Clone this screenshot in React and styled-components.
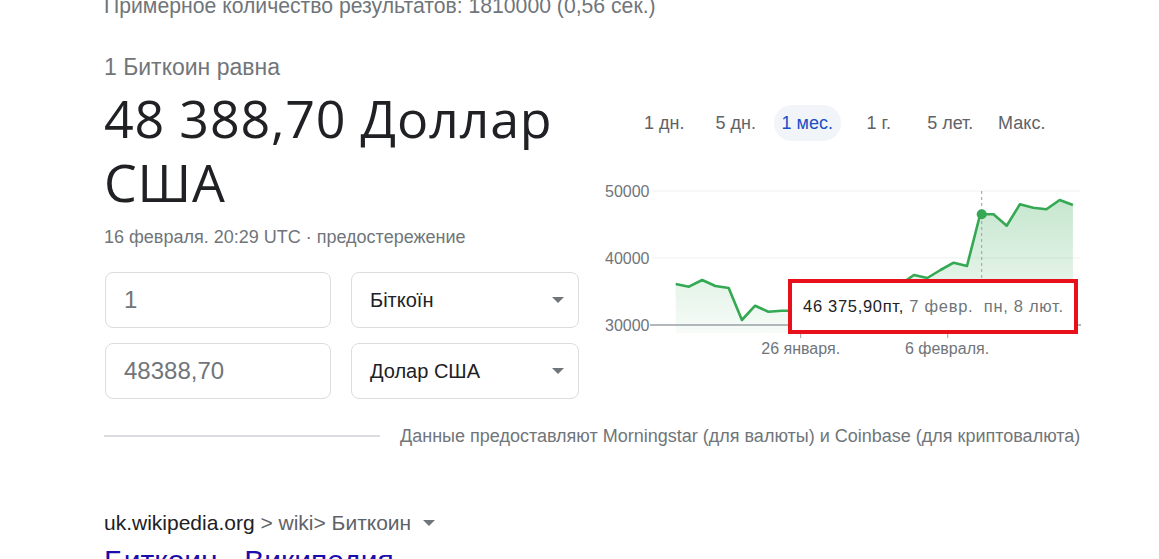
import React from 'react';
import styled, { createGlobalStyle } from 'styled-components';

const Global = createGlobalStyle`
  html, body { margin: 0; padding: 0; background: #fff; }
  body { font-family: "Liberation Sans", Arial, sans-serif; color: #202124; overflow: hidden; }
`;

const Page = styled.div`
  width: 1159px;
  height: 559px;
  overflow: hidden;
  padding-left: 104px;
  box-sizing: border-box;
`;

const Stats = styled.div`
  margin-top: -6px;
  font-size: 21.2px;
  line-height: 24px;
  color: #70757a;
  white-space: nowrap;
`;

const Card = styled.div`
  display: flex;
  margin-top: 36px;
`;

const Left = styled.div`
  width: 496px;
  flex-shrink: 0;
`;

const Lead = styled.div`
  font-size: 23px;
  line-height: 26px;
  color: #70757a;
`;

const Value = styled.div`
  margin-top: 6px;
  font-family: "Open Sans", sans-serif;
  font-size: 52px;
  letter-spacing: 0.8px;
  line-height: 64px;
  color: #202124;
  width: 480px;
`;

const Meta = styled.div`
  margin-top: 12px;
  font-size: 18px;
  line-height: 22px;
  color: #70757a;
`;

const Grid = styled.div`
  display: grid;
  grid-template-columns: 226px 228px;
  column-gap: 20px;
  row-gap: 15px;
  margin-top: 24px;
  margin-left: 1px;
`;

const Field = styled.div`
  height: 56px;
  box-sizing: border-box;
  border: 1px solid #dadce0;
  border-radius: 8px;
  display: flex;
  align-items: center;
  justify-content: space-between;
  padding: 0 14px 0 18px;
  font-size: ${p => (p.$select ? 20 : 24)}px;
  color: ${p => (p.$select ? '#202124' : '#70757a')};
`;

const Caret = styled.span`
  width: 0;
  height: 0;
  border-left: 6px solid transparent;
  border-right: 6px solid transparent;
  border-top: 6px solid #70757a;
`;

const Right = styled.div`
  width: 490px;
  flex-shrink: 0;
`;

const Tabs = styled.div`
  display: flex;
  gap: 5px;
  margin-top: 51px;
  margin-left: 31px;
`;

const Tab = styled.div`
  width: 66.5px;
  height: 36px;
  border-radius: 18px;
  display: flex;
  align-items: center;
  justify-content: center;
  font-size: 18px;
  color: ${p => (p.$active ? '#1a4fc4' : '#5f6368')};
  background: ${p => (p.$active ? '#f1f4f9' : 'transparent')};
  white-space: nowrap;
`;

const ChartWrap = styled.div`
  position: relative;
  width: 490px;
  height: 180px;
  margin-top: 39px;
`;

const Tooltip = styled.div`
  position: absolute;
  left: 188px;
  top: 99px;
  width: 290px;
  height: 55px;
  box-sizing: border-box;
  border: 4px solid #e8101a;
  background: #fff;
  display: flex;
  align-items: center;
  padding-left: 11px;
  font-size: 16.5px;
  letter-spacing: 0.7px;
  white-space: pre;
  color: #70757a;
`;

const Strong = styled.span`
  color: #202124;
`;

const Footer = styled.div`
  display: flex;
  align-items: center;
  gap: 20px;
  margin-top: 26px;
`;

const Rule = styled.div`
  width: 276px;
  height: 2px;
  background: #dadce0;
`;

const Source = styled.div`
  font-size: 18px;
  line-height: 22px;
  color: #70757a;
  white-space: nowrap;
`;

const Cite = styled.div`
  margin-top: 64px;
  display: flex;
  align-items: center;
  font-size: 21px;
  line-height: 24px;
  color: #5f6368;
  white-space: nowrap;
`;

const Host = styled.span`
  color: #202124;
`;

const SmallCaret = styled.span`
  display: inline-block;
  width: 0;
  height: 0;
  border-left: 6px solid transparent;
  border-right: 6px solid transparent;
  border-top: 6px solid #70757a;
  margin-left: 12px;
`;

const Title = styled.div`
  margin-top: 8px;
  font-size: 30px;
  line-height: 36px;
  color: #1a0dab;
  white-space: nowrap;
`;

const ys = [284, 286.7, 280, 286, 288, 320, 305.7, 311.7, 310.7, 310.7, 311, 312, 310, 306, 302, 297, 291, 284, 275, 278, 270, 262.7, 266, 214.3, 214.3, 225.7, 204.3, 207.7, 209.3, 200, 205];
const pts = ys.map((y, i) => [75.7 + i * 13.24, y - 180]);
const line = pts.map(p => p.map(v => v.toFixed(1)).join(',')).join(' ');
const area = `75.7,153 ${line} ${pts[pts.length - 1][0].toFixed(1)},153`;

function Chart() {
  const labelStyle = { fontFamily: '"Liberation Sans", Arial, sans-serif', fontSize: 16, fill: '#70757a' };
  return (
    <svg width="490" height="180" viewBox="0 0 490 180">
      <defs>
        <linearGradient id="g" x1="0" y1="20" x2="0" y2="153" gradientUnits="userSpaceOnUse">
          <stop offset="0" stopColor="#34a853" stopOpacity="0.28" />
          <stop offset="1" stopColor="#34a853" stopOpacity="0.04" />
        </linearGradient>
      </defs>
      <line x1="52" y1="11" x2="480" y2="11" stroke="#f1f1f1" strokeWidth="1" />
      <line x1="52" y1="78" x2="480" y2="78" stroke="#f1f1f1" strokeWidth="1" />
      <text x="5" y="17" style={labelStyle}>50000</text>
      <text x="5" y="84" style={labelStyle}>40000</text>
      <text x="5" y="151" style={labelStyle}>30000</text>
      <polygon points={area} fill="url(#g)" />
      <line x1="381.7" y1="11" x2="381.7" y2="145" stroke="#9aa0a6" strokeWidth="1" strokeDasharray="3,3" />
      <line x1="50" y1="145" x2="481" y2="145" stroke="#9aa0a6" strokeWidth="1.5" />
      <line x1="200.7" y1="153" x2="200.7" y2="158" stroke="#9aa0a6" strokeWidth="1" />
      <line x1="347.7" y1="153" x2="347.7" y2="158" stroke="#9aa0a6" strokeWidth="1" />
      <polyline points={line} fill="none" stroke="#34a853" strokeWidth="2.6" strokeLinejoin="round" />
      <circle cx="381.7" cy="34.3" r="5" fill="#34a853" />
      <text x="200.7" y="174" textAnchor="middle" style={labelStyle}>26 января.</text>
      <text x="347" y="174" textAnchor="middle" style={labelStyle}>6 февраля.</text>
    </svg>
  );
}

export default function App() {
  const tabs = ['1 дн.', '5 дн.', '1 мес.', '1 г.', '5 лет.', 'Макс.'];
  return (
    <Page>
      <Global />
      <Stats>Примерное количество результатов: 1810000 (0,56 сек.)</Stats>
      <Card>
        <Left>
          <Lead>1 Биткоин равна</Lead>
          <Value>48 388,70 Доллар США</Value>
          <Meta>16 февраля. 20:29 UTC · предостережение</Meta>
          <Grid>
            <Field>1</Field>
            <Field $select>Біткоїн<Caret /></Field>
            <Field>48388,70</Field>
            <Field $select>Долар США<Caret /></Field>
          </Grid>
        </Left>
        <Right>
          <Tabs>
            {tabs.map(t => (
              <Tab key={t} $active={t === '1 мес.'}>{t}</Tab>
            ))}
          </Tabs>
          <ChartWrap>
            <Chart />
            <Tooltip>
              <Strong>46 375,90пт,</Strong>{' 7 февр.  пн, 8 лют.'}
            </Tooltip>
          </ChartWrap>
        </Right>
      </Card>
      <Footer>
        <Rule />
        <Source>Данные предоставляют Morningstar (для валюты) и Coinbase (для криптовалюта)</Source>
      </Footer>
      <Cite>
        <Host>uk.wikipedia.org</Host>&nbsp;&gt; wiki&gt; Биткоин<SmallCaret />
      </Cite>
      <Title>Биткоин - Википедия</Title>
    </Page>
  );
}
